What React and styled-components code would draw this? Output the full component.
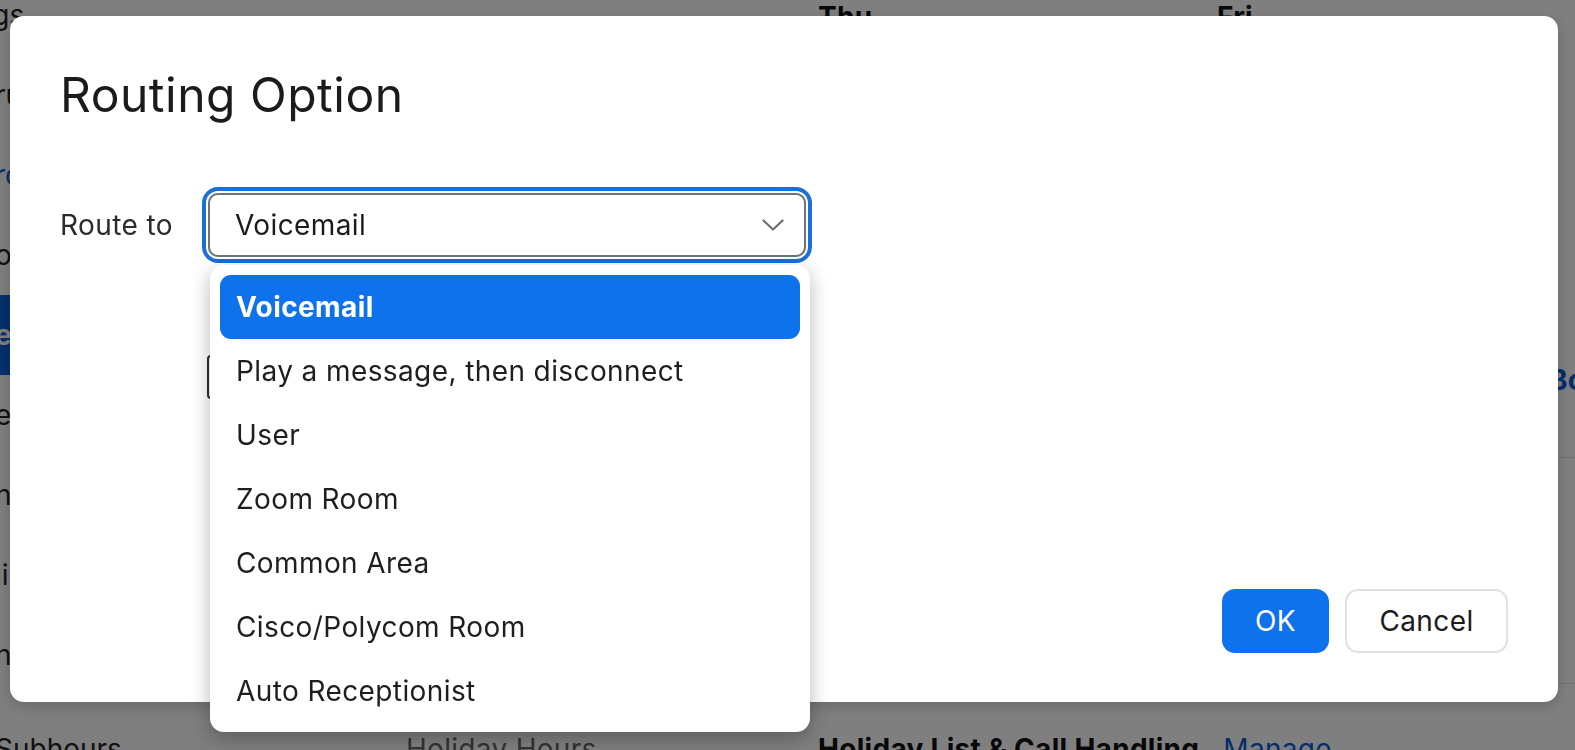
import React from 'react';
import styled, { createGlobalStyle } from 'styled-components';

const GlobalStyle = createGlobalStyle`
	html, body {
		margin: 0;
		padding: 0;
		background: #ffffff;
		font-family: Inter, 'Noto Sans', 'Liberation Sans', sans-serif;
		color: #1f1f1f;
	}
	* {
		box-sizing: border-box;
	}
`;

const Page = styled.div`
	position: relative;
	width: 1575px;
	height: 750px;
	overflow: hidden;
	display: grid;
	grid-template-columns: 358px 1fr;
	background: #ffffff;
`;

const Sidebar = styled.nav`
	background: #fdfdfd;
	display: flex;
	flex-direction: column;
	overflow: hidden;
	margin: -25px 0 0 -5px;
`;

const SideItem = styled.div`
	flex: 0 0 80px;
	display: flex;
	align-items: center;
	font-size: 28px;
	white-space: nowrap;
	margin-top: ${(props) => props.gap || 0}px;
	text-indent: ${(props) => props.indent || 0}px;
	color: ${(props) => (props.active ? '#ffffff' : props.link ? '#0b5cd5' : '#222222')};
	background: ${(props) => (props.active ? '#0e5fd8' : 'transparent')};
	font-weight: ${(props) => (props.active ? 700 : 400)};
`;

const Main = styled.main`
	display: flex;
	flex-direction: column;
	padding-left: 48px;
`;

const Row = styled.div`
	display: grid;
	grid-template-columns: 412px 399px 1fr;
	flex: 0 0 ${(props) => props.h}px;
	padding-top: ${(props) => props.pt || 0}px;
	border-bottom: ${(props) => (props.line ? '1px solid #e2e2e2' : 'none')};
	font-size: 28px;
	letter-spacing: 0.3px;
`;

const DayHead = styled.div`
	font-weight: 700;
	color: #111;
`;

const Muted = styled.div`
	color: #666;
`;

const Strong = styled.div`
	font-weight: 700;
	color: #111;
	white-space: nowrap;
`;

const Link = styled.span`
	color: #0b5cd5;
	font-weight: 400;
	margin-left: 24px;
`;

const EdgeLink = styled.div`
	padding-left: 332px;
	color: #0b5cd5;
	font-weight: 700;
	align-self: end;
	padding-bottom: 60px;
`;

const Overlay = styled.div`
	position: fixed;
	inset: 0;
	background: rgba(0, 0, 0, 0.5);
`;

const Modal = styled.div`
	position: fixed;
	left: 10px;
	top: 16px;
	width: 1548px;
	height: 686px;
	background: #ffffff;
	border-radius: 14px;
	box-shadow: 0 4px 14px rgba(0, 0, 0, 0.18);
	padding: 50px 50px 49px 50px;
	display: flex;
	flex-direction: column;
`;

const Title = styled.h2`
	margin: 0;
	font-size: 48px;
	line-height: 58px;
	font-weight: 400;
	letter-spacing: 0.5px;
	color: #1b1b1b;
`;

const FieldRow = styled.div`
	margin-top: 69px;
	display: flex;
	align-items: center;
`;

const Label = styled.div`
	width: 148px;
	font-size: 28px;
	letter-spacing: 0.4px;
	color: #2b2b2b;
`;

const SelectBox = styled.div`
	width: 598px;
	height: 64px;
	border: 2px solid #6f7479;
	border-radius: 10px;
	box-shadow: 0 0 0 2px #ffffff, 0 0 0 6px #1b6fd8;
	display: flex;
	align-items: center;
	justify-content: space-between;
	padding: 0 20px 0 25px;
	font-size: 28px;
	letter-spacing: 0.4px;
	color: #1b1b1b;
`;

const Chevron = () => (
	<svg width="22" height="12" viewBox="0 0 22 12" fill="none">
		<polyline points="1.5,1.5 11,10.5 20.5,1.5" stroke="#6b6f74" strokeWidth="2.2" strokeLinecap="round" strokeLinejoin="round" />
	</svg>
);

const HiddenField = styled.div`
	margin: 98px 0 0 147px;
	width: 500px;
	height: 44px;
	border: 2px solid #2f2f2f;
	border-radius: 4px;
`;

const Footer = styled.div`
	margin-top: auto;
	display: flex;
	justify-content: flex-end;
	gap: 16px;
`;

const Button = styled.button`
	height: 64px;
	padding: 0;
	width: ${(props) => (props.primary ? '107px' : '163px')};
	border-radius: 13px;
	font-family: inherit;
	font-size: 28px;
	letter-spacing: 0.4px;
	cursor: pointer;
	background: ${(props) => (props.primary ? '#0e72ed' : '#ffffff')};
	color: ${(props) => (props.primary ? '#ffffff' : '#1b1b1b')};
	border: ${(props) => (props.primary ? '2px solid #0e72ed' : '2px solid #e0e0e0')};
`;

const Menu = styled.ul`
	position: fixed;
	left: 210px;
	top: 265px;
	width: 600px;
	margin: 0;
	padding: 10px 10px 9px 10px;
	list-style: none;
	background: #ffffff;
	border-radius: 14px;
	box-shadow: 0 6px 20px rgba(0, 0, 0, 0.28);
`;

const MenuItem = styled.li`
	height: 64px;
	display: flex;
	align-items: center;
	padding-left: 16px;
	border-radius: 11px;
	font-size: 28px;
	letter-spacing: 0.4px;
	background: ${(props) => (props.selected ? '#0e72ed' : 'transparent')};
	color: ${(props) => (props.selected ? '#ffffff' : '#1e1e1e')};
	font-weight: ${(props) => (props.selected ? 700 : 400)};
`;

const options = [
	'Voicemail',
	'Play a message, then disconnect',
	'User',
	'Zoom Room',
	'Common Area',
	'Cisco/Polycom Room',
	'Auto Receptionist',
];

const sideItems = [
	{ text: 'Settings', indent: -78 },
	{ text: 'rules' },
	{ text: 'routing', link: true },
	{ text: 'overview' },
	{ text: 'extensions', active: true },
	{ text: 'emergency' },
	{ text: 'number' },
	{ text: 'lines' },
	{ text: 'number' },
	{ text: 'Subhours', gap: 14 },
];

const App = () => {
	return (
		<>
			<GlobalStyle />
			<Page>
				<Sidebar>
					{sideItems.map((item, i) => (
						<SideItem key={i} active={item.active} link={item.link} indent={item.indent} gap={item.gap}>
							{item.text}
						</SideItem>
					))}
				</Sidebar>
				<Main>
					<Row h={40} pt={0}>
						<div />
						<DayHead>Thu</DayHead>
						<DayHead>Fri</DayHead>
					</Row>
					<Row h={418} line>
						<div />
						<div />
						<EdgeLink>Book</EdgeLink>
					</Row>
					<Row h={226} line />
					<Row h={66} pt={48}>
						<Muted>Holiday Hours</Muted>
						<Strong>
							Holiday List &amp; Call Handling<Link>Manage</Link>
						</Strong>
					</Row>
				</Main>
			</Page>
			<Overlay />
			<Modal>
				<Title>Routing Option</Title>
				<FieldRow>
					<Label>Route to</Label>
					<SelectBox>
						<span>Voicemail</span>
						<Chevron />
					</SelectBox>
				</FieldRow>
				<HiddenField />
				<Footer>
					<Button primary>OK</Button>
					<Button>Cancel</Button>
				</Footer>
			</Modal>
			<Menu>
				{options.map((opt, i) => (
					<MenuItem key={opt} selected={i === 0}>
						{opt}
					</MenuItem>
				))}
			</Menu>
		</>
	);
};

export default App;
